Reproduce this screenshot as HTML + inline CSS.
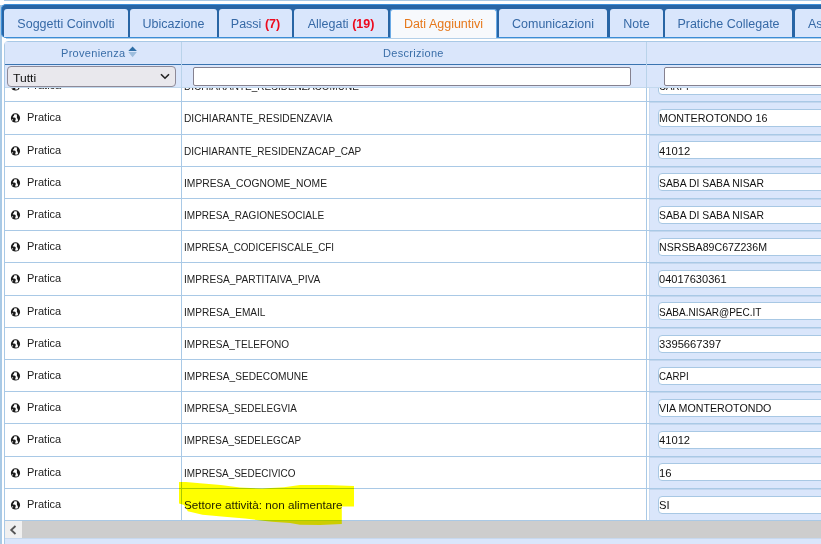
<!DOCTYPE html>
<html><head><meta charset="utf-8"><style>
*{margin:0;padding:0;box-sizing:border-box}
html,body{width:821px;height:544px;overflow:hidden;background:#fff;font-family:"Liberation Sans",sans-serif}
.abs{position:absolute}
#topline{position:absolute;left:4px;top:0;width:830px;height:1px;background:#a9c9e5}
#leftline{position:absolute;left:0;top:5px;width:2px;height:540px;background:#a9c9e5}
#bar{position:absolute;left:1px;top:4px;width:840px;height:34px;background:#2865a5;border-top:1px solid #3d8ed8;border-left:1px solid #3d8ed8;border-bottom:1px solid #3b8dd6;border-radius:5px 0 0 5px}
.tab{position:absolute;top:9px;height:28px;background:#d9e6fc;border-radius:3px 3px 0 0;color:#3669a6;font-size:12.5px;line-height:28px;text-align:center;white-space:nowrap;padding-top:1px}
.tab b{color:#ec0a1e}
.tab.act{background:#f7f9fc;color:#e6781b;height:29px;border:1px solid #6aaae6;border-bottom:none;line-height:26px}
#tblline{position:absolute;left:6px;top:38px;width:830px;height:1px;background:#b3cfe8}
#tbl{position:absolute;left:4px;top:41px;width:830px;height:510px;border:1px solid #a9c9e6;border-radius:4px 0 0 0;background:#fff;overflow:hidden}
#hdr{position:absolute;left:5px;top:42px;width:830px;height:22px;background:#dae6fb}
#hline{position:absolute;left:5px;top:64px;width:830px;height:1px;background:#3a74b0}
#flt{position:absolute;left:5px;top:65px;width:830px;height:23px;background:#dae6fb;border-bottom:1px solid #c3d9ee}
.vsep{position:absolute;width:1px;background:#a9c9e6}
.ht{position:absolute;top:47px;font-size:11px;line-height:13px;color:#3a6ea8;white-space:nowrap;letter-spacing:0.3px}
#sel{position:absolute;left:7px;top:66px;width:169px;height:21px;background:#e9e8ed;border:1px solid #8e8a98;border-radius:4px;font-size:12px;line-height:19px;padding-left:5px;color:#111}
.finp{position:absolute;top:67px;height:19px;background:#fff;border:1px solid #85818f;border-radius:2px}
#clip{position:absolute;left:0;top:88px;width:821px;height:433px;overflow:hidden}
#inner{position:absolute;left:0;top:-88px;width:821px;height:544px}
#col3bg{position:absolute;left:649px;top:60px;width:200px;height:470px;background:#dae6fb;border-left:1px solid #c9dbf1}
.sh{position:absolute;left:649px;width:200px;height:1px;background:#c2d6ee}
.row{position:absolute;left:5px;width:830px;border-top:1px solid #a9c9e6}
.c1{position:absolute;left:11px;font-size:11px;line-height:13px;color:#222;white-space:nowrap}
.c1 .g{position:absolute;left:-1px;top:1px}
.c1 .pt{position:absolute;left:16px;top:0}
.c2{position:absolute;transform-origin:0 0;left:184px;font-size:11px;line-height:13px;color:#222;white-space:nowrap}
.c3{position:absolute;transform-origin:0 0;left:659px;font-size:11px;line-height:13px;color:#111;white-space:nowrap}
.inp{position:absolute;left:658px;width:200px;height:18px;background:#fff;border:1px solid #a8c8e4;border-radius:4px}
#sb{position:absolute;left:5px;top:520px;width:830px;height:18px;background:#cdcdcd;border-top:1px solid #a9c9e6}
#sbl{position:absolute;left:5px;top:521px;width:17px;height:17px;background:#f0f0f0}
#sbb{position:absolute;left:5px;top:538px;width:830px;height:6px;background:#dae6fb;border-top:1px solid #c7d9ef}
#hl{position:absolute;left:0;top:0;mix-blend-mode:multiply}
</style></head><body>
<div id="topline"></div>
<div id="leftline"></div>
<div id="bar"></div>
<div class="tab" style="left:4px;width:124px">Soggetti Coinvolti</div>
<div class="tab" style="left:130px;width:87px">Ubicazione</div>
<div class="tab" style="left:219px;width:73px">Passi <b>(7)</b></div>
<div class="tab" style="left:294px;width:94px">Allegati <b>(19)</b></div>
<div class="tab act" style="left:390px;width:107px">Dati Aggiuntivi</div>
<div class="tab" style="left:499px;width:108px">Comunicazioni</div>
<div class="tab" style="left:610px;width:53px">Note</div>
<div class="tab" style="left:665px;width:127px">Pratiche Collegate</div>
<div class="tab" style="left:795px;width:60px;text-align:left;padding-left:13px">Assegnazioni</div>
<div id="tblline"></div>
<div id="tbl"></div>
<div id="hdr"></div>
<div id="hline"></div>
<div id="flt"></div>
<div class="ht" style="left:61px">Provenienza</div>
<svg class="abs" style="left:128px;top:46px" width="10" height="12" viewBox="0 0 10 12"><path d="M0.3 5.1 L4.6 0.4 L8.9 5.1Z" fill="#2f6ea6"/><path d="M0.3 6.1 L4.6 11.2 L8.9 6.1Z" fill="#9dbddd"/></svg>
<div class="ht" style="left:383px">Descrizione</div>
<div id="sel"><span style="position:absolute;left:5px;top:4px;line-height:15px;font-size:11px;transform:scaleX(1.1);transform-origin:0 0">Tutti</span><svg class="abs" style="left:152px;top:6px" width="10" height="7" viewBox="0 0 10 7"><path d="M1 1.2 L5 5.2 L9 1.2" stroke="#222" stroke-width="1.6" fill="none"/></svg></div>
<div class="finp" style="left:193px;width:438px"></div>
<div class="finp" style="left:664px;width:200px"></div>
<div id="clip"><div id="inner">
<div id="col3bg"></div>
<div class="row" style="top:70px;height:31px"></div>
<div class="sh" style="top:71px"></div>
<div class="c1" style="top:79px"><svg class="g" width="12" height="12" viewBox="0 0 12 12"><circle cx="5.5" cy="5.9" r="4.6" fill="#1a1a1a"/><path d="M4.1 2.6 Q5.5 2.2 6.8 2.5 L7.0 4.3 Q6.5 5.2 7.2 6.2 Q8.1 7.4 8.0 9.0 Q7.0 9.6 5.3 9.5 Q4.9 8.8 5.5 8.1 Q6.0 7.2 5.5 6.1 Q4.9 5.4 4.0 5.5 L2.9 5.5 Q2.8 4.7 3.4 4.3 Q4.3 3.8 4.1 2.6Z" fill="#fff"/><circle cx="2.6" cy="7.8" r="0.6" fill="#fff"/></svg><span class="pt">Pratica</span></div>
<div class="c2" style="top:80px;transform:scaleX(0.9089)">DICHIARANTE_RESIDENZACOMUNE</div>
<div class="inp" style="top:77px"></div>
<div class="c3" style="top:80px;transform:scaleX(0.8803)">CARPI</div>
<div class="row" style="top:101px;height:33px"></div>
<div class="sh" style="top:102px"></div>
<div class="c1" style="top:111px"><svg class="g" width="12" height="12" viewBox="0 0 12 12"><circle cx="5.5" cy="5.9" r="4.6" fill="#1a1a1a"/><path d="M4.1 2.6 Q5.5 2.2 6.8 2.5 L7.0 4.3 Q6.5 5.2 7.2 6.2 Q8.1 7.4 8.0 9.0 Q7.0 9.6 5.3 9.5 Q4.9 8.8 5.5 8.1 Q6.0 7.2 5.5 6.1 Q4.9 5.4 4.0 5.5 L2.9 5.5 Q2.8 4.7 3.4 4.3 Q4.3 3.8 4.1 2.6Z" fill="#fff"/><circle cx="2.6" cy="7.8" r="0.6" fill="#fff"/></svg><span class="pt">Pratica</span></div>
<div class="c2" style="top:112px;transform:scaleX(0.9249)">DICHIARANTE_RESIDENZAVIA</div>
<div class="inp" style="top:109px"></div>
<div class="c3" style="top:112px;transform:scaleX(0.9763)">MONTEROTONDO 16</div>
<div class="row" style="top:134px;height:32px"></div>
<div class="sh" style="top:135px"></div>
<div class="c1" style="top:144px"><svg class="g" width="12" height="12" viewBox="0 0 12 12"><circle cx="5.5" cy="5.9" r="4.6" fill="#1a1a1a"/><path d="M4.1 2.6 Q5.5 2.2 6.8 2.5 L7.0 4.3 Q6.5 5.2 7.2 6.2 Q8.1 7.4 8.0 9.0 Q7.0 9.6 5.3 9.5 Q4.9 8.8 5.5 8.1 Q6.0 7.2 5.5 6.1 Q4.9 5.4 4.0 5.5 L2.9 5.5 Q2.8 4.7 3.4 4.3 Q4.3 3.8 4.1 2.6Z" fill="#fff"/><circle cx="2.6" cy="7.8" r="0.6" fill="#fff"/></svg><span class="pt">Pratica</span></div>
<div class="c2" style="top:145px;transform:scaleX(0.9092)">DICHIARANTE_RESIDENZACAP_CAP</div>
<div class="inp" style="top:141px"></div>
<div class="c3" style="top:145px;transform:scaleX(1.0231)">41012</div>
<div class="row" style="top:166px;height:32px"></div>
<div class="sh" style="top:167px"></div>
<div class="c1" style="top:176px"><svg class="g" width="12" height="12" viewBox="0 0 12 12"><circle cx="5.5" cy="5.9" r="4.6" fill="#1a1a1a"/><path d="M4.1 2.6 Q5.5 2.2 6.8 2.5 L7.0 4.3 Q6.5 5.2 7.2 6.2 Q8.1 7.4 8.0 9.0 Q7.0 9.6 5.3 9.5 Q4.9 8.8 5.5 8.1 Q6.0 7.2 5.5 6.1 Q4.9 5.4 4.0 5.5 L2.9 5.5 Q2.8 4.7 3.4 4.3 Q4.3 3.8 4.1 2.6Z" fill="#fff"/><circle cx="2.6" cy="7.8" r="0.6" fill="#fff"/></svg><span class="pt">Pratica</span></div>
<div class="c2" style="top:177px;transform:scaleX(0.9358)">IMPRESA_COGNOME_NOME</div>
<div class="inp" style="top:173px"></div>
<div class="c3" style="top:177px;transform:scaleX(0.9436)">SABA DI SABA NISAR</div>
<div class="row" style="top:198px;height:32px"></div>
<div class="sh" style="top:199px"></div>
<div class="c1" style="top:208px"><svg class="g" width="12" height="12" viewBox="0 0 12 12"><circle cx="5.5" cy="5.9" r="4.6" fill="#1a1a1a"/><path d="M4.1 2.6 Q5.5 2.2 6.8 2.5 L7.0 4.3 Q6.5 5.2 7.2 6.2 Q8.1 7.4 8.0 9.0 Q7.0 9.6 5.3 9.5 Q4.9 8.8 5.5 8.1 Q6.0 7.2 5.5 6.1 Q4.9 5.4 4.0 5.5 L2.9 5.5 Q2.8 4.7 3.4 4.3 Q4.3 3.8 4.1 2.6Z" fill="#fff"/><circle cx="2.6" cy="7.8" r="0.6" fill="#fff"/></svg><span class="pt">Pratica</span></div>
<div class="c2" style="top:209px;transform:scaleX(0.9108)">IMPRESA_RAGIONESOCIALE</div>
<div class="inp" style="top:206px"></div>
<div class="c3" style="top:209px;transform:scaleX(0.9436)">SABA DI SABA NISAR</div>
<div class="row" style="top:230px;height:32px"></div>
<div class="sh" style="top:231px"></div>
<div class="c1" style="top:240px"><svg class="g" width="12" height="12" viewBox="0 0 12 12"><circle cx="5.5" cy="5.9" r="4.6" fill="#1a1a1a"/><path d="M4.1 2.6 Q5.5 2.2 6.8 2.5 L7.0 4.3 Q6.5 5.2 7.2 6.2 Q8.1 7.4 8.0 9.0 Q7.0 9.6 5.3 9.5 Q4.9 8.8 5.5 8.1 Q6.0 7.2 5.5 6.1 Q4.9 5.4 4.0 5.5 L2.9 5.5 Q2.8 4.7 3.4 4.3 Q4.3 3.8 4.1 2.6Z" fill="#fff"/><circle cx="2.6" cy="7.8" r="0.6" fill="#fff"/></svg><span class="pt">Pratica</span></div>
<div class="c2" style="top:241px;transform:scaleX(0.8924)">IMPRESA_CODICEFISCALE_CFI</div>
<div class="inp" style="top:238px"></div>
<div class="c3" style="top:241px;transform:scaleX(0.9652)">NSRSBA89C67Z236M</div>
<div class="row" style="top:262px;height:33px"></div>
<div class="sh" style="top:263px"></div>
<div class="c1" style="top:272px"><svg class="g" width="12" height="12" viewBox="0 0 12 12"><circle cx="5.5" cy="5.9" r="4.6" fill="#1a1a1a"/><path d="M4.1 2.6 Q5.5 2.2 6.8 2.5 L7.0 4.3 Q6.5 5.2 7.2 6.2 Q8.1 7.4 8.0 9.0 Q7.0 9.6 5.3 9.5 Q4.9 8.8 5.5 8.1 Q6.0 7.2 5.5 6.1 Q4.9 5.4 4.0 5.5 L2.9 5.5 Q2.8 4.7 3.4 4.3 Q4.3 3.8 4.1 2.6Z" fill="#fff"/><circle cx="2.6" cy="7.8" r="0.6" fill="#fff"/></svg><span class="pt">Pratica</span></div>
<div class="c2" style="top:273px;transform:scaleX(0.9245)">IMPRESA_PARTITAIVA_PIVA</div>
<div class="inp" style="top:270px"></div>
<div class="c3" style="top:273px;transform:scaleX(1.0045)">04017630361</div>
<div class="row" style="top:295px;height:32px"></div>
<div class="sh" style="top:296px"></div>
<div class="c1" style="top:305px"><svg class="g" width="12" height="12" viewBox="0 0 12 12"><circle cx="5.5" cy="5.9" r="4.6" fill="#1a1a1a"/><path d="M4.1 2.6 Q5.5 2.2 6.8 2.5 L7.0 4.3 Q6.5 5.2 7.2 6.2 Q8.1 7.4 8.0 9.0 Q7.0 9.6 5.3 9.5 Q4.9 8.8 5.5 8.1 Q6.0 7.2 5.5 6.1 Q4.9 5.4 4.0 5.5 L2.9 5.5 Q2.8 4.7 3.4 4.3 Q4.3 3.8 4.1 2.6Z" fill="#fff"/><circle cx="2.6" cy="7.8" r="0.6" fill="#fff"/></svg><span class="pt">Pratica</span></div>
<div class="c2" style="top:306px;transform:scaleX(0.9194)">IMPRESA_EMAIL</div>
<div class="inp" style="top:302px"></div>
<div class="c3" style="top:306px;transform:scaleX(0.9091)">SABA.NISAR@PEC.IT</div>
<div class="row" style="top:327px;height:32px"></div>
<div class="sh" style="top:328px"></div>
<div class="c1" style="top:337px"><svg class="g" width="12" height="12" viewBox="0 0 12 12"><circle cx="5.5" cy="5.9" r="4.6" fill="#1a1a1a"/><path d="M4.1 2.6 Q5.5 2.2 6.8 2.5 L7.0 4.3 Q6.5 5.2 7.2 6.2 Q8.1 7.4 8.0 9.0 Q7.0 9.6 5.3 9.5 Q4.9 8.8 5.5 8.1 Q6.0 7.2 5.5 6.1 Q4.9 5.4 4.0 5.5 L2.9 5.5 Q2.8 4.7 3.4 4.3 Q4.3 3.8 4.1 2.6Z" fill="#fff"/><circle cx="2.6" cy="7.8" r="0.6" fill="#fff"/></svg><span class="pt">Pratica</span></div>
<div class="c2" style="top:338px;transform:scaleX(0.9145)">IMPRESA_TELEFONO</div>
<div class="inp" style="top:335px"></div>
<div class="c3" style="top:338px;transform:scaleX(1.0165)">3395667397</div>
<div class="row" style="top:359px;height:32px"></div>
<div class="sh" style="top:360px"></div>
<div class="c1" style="top:369px"><svg class="g" width="12" height="12" viewBox="0 0 12 12"><circle cx="5.5" cy="5.9" r="4.6" fill="#1a1a1a"/><path d="M4.1 2.6 Q5.5 2.2 6.8 2.5 L7.0 4.3 Q6.5 5.2 7.2 6.2 Q8.1 7.4 8.0 9.0 Q7.0 9.6 5.3 9.5 Q4.9 8.8 5.5 8.1 Q6.0 7.2 5.5 6.1 Q4.9 5.4 4.0 5.5 L2.9 5.5 Q2.8 4.7 3.4 4.3 Q4.3 3.8 4.1 2.6Z" fill="#fff"/><circle cx="2.6" cy="7.8" r="0.6" fill="#fff"/></svg><span class="pt">Pratica</span></div>
<div class="c2" style="top:370px;transform:scaleX(0.9213)">IMPRESA_SEDECOMUNE</div>
<div class="inp" style="top:367px"></div>
<div class="c3" style="top:370px;transform:scaleX(0.8803)">CARPI</div>
<div class="row" style="top:391px;height:32px"></div>
<div class="sh" style="top:392px"></div>
<div class="c1" style="top:401px"><svg class="g" width="12" height="12" viewBox="0 0 12 12"><circle cx="5.5" cy="5.9" r="4.6" fill="#1a1a1a"/><path d="M4.1 2.6 Q5.5 2.2 6.8 2.5 L7.0 4.3 Q6.5 5.2 7.2 6.2 Q8.1 7.4 8.0 9.0 Q7.0 9.6 5.3 9.5 Q4.9 8.8 5.5 8.1 Q6.0 7.2 5.5 6.1 Q4.9 5.4 4.0 5.5 L2.9 5.5 Q2.8 4.7 3.4 4.3 Q4.3 3.8 4.1 2.6Z" fill="#fff"/><circle cx="2.6" cy="7.8" r="0.6" fill="#fff"/></svg><span class="pt">Pratica</span></div>
<div class="c2" style="top:402px;transform:scaleX(0.9008)">IMPRESA_SEDELEGVIA</div>
<div class="inp" style="top:399px"></div>
<div class="c3" style="top:402px;transform:scaleX(0.9696)">VIA MONTEROTONDO</div>
<div class="row" style="top:423px;height:33px"></div>
<div class="sh" style="top:424px"></div>
<div class="c1" style="top:433px"><svg class="g" width="12" height="12" viewBox="0 0 12 12"><circle cx="5.5" cy="5.9" r="4.6" fill="#1a1a1a"/><path d="M4.1 2.6 Q5.5 2.2 6.8 2.5 L7.0 4.3 Q6.5 5.2 7.2 6.2 Q8.1 7.4 8.0 9.0 Q7.0 9.6 5.3 9.5 Q4.9 8.8 5.5 8.1 Q6.0 7.2 5.5 6.1 Q4.9 5.4 4.0 5.5 L2.9 5.5 Q2.8 4.7 3.4 4.3 Q4.3 3.8 4.1 2.6Z" fill="#fff"/><circle cx="2.6" cy="7.8" r="0.6" fill="#fff"/></svg><span class="pt">Pratica</span></div>
<div class="c2" style="top:434px;transform:scaleX(0.8985)">IMPRESA_SEDELEGCAP</div>
<div class="inp" style="top:431px"></div>
<div class="c3" style="top:434px;transform:scaleX(1.0165)">41012</div>
<div class="row" style="top:456px;height:32px"></div>
<div class="sh" style="top:457px"></div>
<div class="c1" style="top:466px"><svg class="g" width="12" height="12" viewBox="0 0 12 12"><circle cx="5.5" cy="5.9" r="4.6" fill="#1a1a1a"/><path d="M4.1 2.6 Q5.5 2.2 6.8 2.5 L7.0 4.3 Q6.5 5.2 7.2 6.2 Q8.1 7.4 8.0 9.0 Q7.0 9.6 5.3 9.5 Q4.9 8.8 5.5 8.1 Q6.0 7.2 5.5 6.1 Q4.9 5.4 4.0 5.5 L2.9 5.5 Q2.8 4.7 3.4 4.3 Q4.3 3.8 4.1 2.6Z" fill="#fff"/><circle cx="2.6" cy="7.8" r="0.6" fill="#fff"/></svg><span class="pt">Pratica</span></div>
<div class="c2" style="top:467px;transform:scaleX(0.9029)">IMPRESA_SEDECIVICO</div>
<div class="inp" style="top:463px"></div>
<div class="c3" style="top:467px;transform:scaleX(1.0286)">16</div>
<div class="row" style="top:488px;height:32px"></div>
<div class="sh" style="top:489px"></div>
<div class="c1" style="top:498px"><svg class="g" width="12" height="12" viewBox="0 0 12 12"><circle cx="5.5" cy="5.9" r="4.6" fill="#1a1a1a"/><path d="M4.1 2.6 Q5.5 2.2 6.8 2.5 L7.0 4.3 Q6.5 5.2 7.2 6.2 Q8.1 7.4 8.0 9.0 Q7.0 9.6 5.3 9.5 Q4.9 8.8 5.5 8.1 Q6.0 7.2 5.5 6.1 Q4.9 5.4 4.0 5.5 L2.9 5.5 Q2.8 4.7 3.4 4.3 Q4.3 3.8 4.1 2.6Z" fill="#fff"/><circle cx="2.6" cy="7.8" r="0.6" fill="#fff"/></svg><span class="pt">Pratica</span></div>
<div class="c2" style="top:499px;transform:scaleX(1.0630)">Settore attività: non alimentare</div>
<div class="inp" style="top:496px"></div>
<div class="c3" style="top:499px;transform:scaleX(1.0186)">SI</div>
<div class="vsep" style="left:181px;top:42px;height:478px"></div>
<div class="vsep" style="left:646px;top:42px;height:478px"></div>
</div></div>
<div class="vsep" style="left:181px;top:42px;height:46px;background:#b9d3ea"></div>
<div class="vsep" style="left:646px;top:42px;height:46px;background:#b9d3ea"></div>
<div id="sb"></div>
<div id="sbl"><svg class="abs" style="left:4px;top:4px" width="9" height="10" viewBox="0 0 9 10"><path d="M6.5 1 L2.2 5 L6.5 9" stroke="#555" stroke-width="1.8" fill="none"/></svg></div>
<div id="sbb"></div>
<svg id="hl" width="821" height="544" viewBox="0 0 821 544"><path d="M179 482 L186 482 L200 483.3 L220.7 485.1 L240 487.6 L262 488.5 L284 487.2 L300 485.1 L327 485 L354 486 L354 506.4 L341.8 506.4 L341.8 524 L320 525 L300 524.7 L290 522.9 L272 521.7 L245 518.6 L224.4 516.8 L202.5 514.7 L187.8 511.3 L184 505 L179 503.4Z" fill="#ffff00"/></svg>
</body></html>
